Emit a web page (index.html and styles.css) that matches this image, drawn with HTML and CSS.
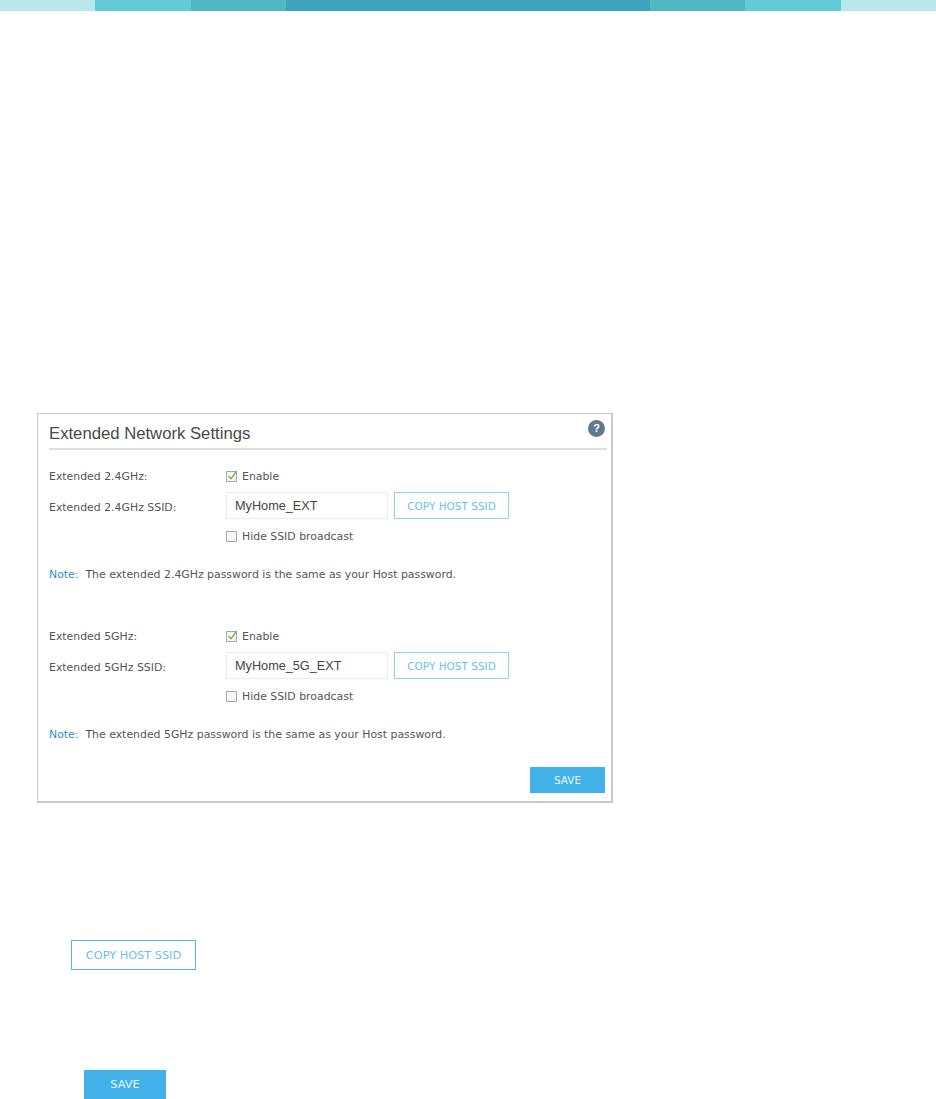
FILE: index.html
```html
<!DOCTYPE html>
<html lang="en">
<head>
<meta charset="utf-8">
<title>Extended Network Settings</title>
<link rel="stylesheet" href="styles.css">
</head>
<body>
<div class="band">
  <div class="seg s1"></div><div class="seg s2"></div><div class="seg s3"></div>
  <div class="seg s4"></div>
  <div class="seg s3"></div><div class="seg s2"></div><div class="seg s1"></div>
</div>

<section class="panel">
  <header class="head">
    <h1 class="title">Extended Network Settings</h1>
    <span class="help">?</span>
  </header>

  <div class="group">
    <div class="row row-check">
      <span class="label">Extended 2.4GHz:</span>
      <span class="check"><svg class="box" viewBox="0 0 12 12"><rect x="0.5" y="1.5" width="10" height="10" fill="#f6f6f6" stroke="#a9a9a9"/><path d="M2.6 5.8 5 8.6 10.8 1.2" fill="none" stroke="#6cb33f" stroke-width="1.3"/></svg>Enable</span>
    </div>
    <div class="row row-input">
      <span class="label">Extended 2.4GHz SSID:</span>
      <span class="input">MyHome_EXT</span>
      <button class="copy">COPY HOST SSID</button>
    </div>
    <div class="row row-check">
      <span class="label"></span>
      <span class="check"><svg class="box" viewBox="0 0 12 12"><rect x="0.5" y="1.5" width="10" height="10" fill="#f6f6f6" stroke="#a9a9a9"/></svg>Hide SSID broadcast</span>
    </div>
    <p class="note"><b class="note-key">Note:</b>The extended 2.4GHz password is the same as your Host password.</p>
  </div>

  <div class="group group-2">
    <div class="row row-check">
      <span class="label">Extended 5GHz:</span>
      <span class="check"><svg class="box" viewBox="0 0 12 12"><rect x="0.5" y="1.5" width="10" height="10" fill="#f6f6f6" stroke="#a9a9a9"/><path d="M2.6 5.8 5 8.6 10.8 1.2" fill="none" stroke="#6cb33f" stroke-width="1.3"/></svg>Enable</span>
    </div>
    <div class="row row-input">
      <span class="label">Extended 5GHz SSID:</span>
      <span class="input">MyHome_5G_EXT</span>
      <button class="copy">COPY HOST SSID</button>
    </div>
    <div class="row row-check">
      <span class="label"></span>
      <span class="check"><svg class="box" viewBox="0 0 12 12"><rect x="0.5" y="1.5" width="10" height="10" fill="#f6f6f6" stroke="#a9a9a9"/></svg>Hide SSID broadcast</span>
    </div>
    <p class="note"><b class="note-key">Note:</b>The extended 5GHz password is the same as your Host password.</p>
  </div>

  <div class="actions"><button class="save">SAVE</button></div>
</section>

<div class="sample sample-copy"><button class="copy copy-large">COPY HOST SSID</button></div>
<div class="sample sample-save"><button class="save save-large">SAVE</button></div>
</body>
</html>
```

FILE: styles.css
```css
* { box-sizing: border-box; }
html, body { margin: 0; padding: 0; background: #fff; }
body {
  height: 1099px;
  overflow: hidden;
  font-family: "DejaVu Sans", sans-serif;
  font-size: 10.9px;
  color: #555;
}
.band { display: flex; height: 11px; }
.seg { flex: 0 0 95.3px; }
.s1 { background: #b8e8ec; }
.s2 { background: #62cbd5; }
.s3 { background: #50b8c3; }
.s4 { flex: 1 1 auto; background: #3fa4bb; }

.panel {
  width: 576px;
  height: 390px;
  margin: 402px 0 0 37px;
  padding: 0 4px 0 11px;
  border: 1px solid #c9c9c9;
  border-width: 1px 2px 2px 1px;
}
.head {
  display: flex;
  justify-content: space-between;
  height: 36px;
  border-bottom: 2px solid #dedede;
}
.title {
  margin: 10px 0 0;
  font: 400 16.7px/20px "Liberation Sans", Arial, sans-serif;
  color: #4a4a4a;
}
.help {
  width: 17px;
  height: 17px;
  margin: 6px 2px 0 0;
  border-radius: 50%;
  background: #5f7a8c;
  color: #fff;
  font: 700 11px/17px "Liberation Sans", Arial, sans-serif;
  text-align: center;
}
.group { padding-top: 19px; }
.group-2 { padding-top: 47px; }
.row { display: flex; align-items: center; }
.row-check { height: 14px; }
.row-input { height: 27px; margin: 9px 0 10px; }
.label { flex: 0 0 177px; }
.row-input .label { padding-top: 3px; }
.check { display: flex; align-items: center; }
.box { width: 12px; height: 12px; margin-right: 4px; }
.input {
  width: 162px;
  height: 27px;
  padding: 1px 8px 0;
  border: 1px solid #ebebeb;
  font: 400 12.7px/25px "Liberation Sans", Arial, sans-serif;
  color: #444;
}
.copy {
  width: 115px;
  height: 27px;
  margin-left: 6px;
  padding: 1px 0 0;
  border: 1px solid #8ed2f2;
  background: #fff;
  color: #6cc0ee;
  font: 400 10.5px/1 "DejaVu Sans", sans-serif;
}
.note { margin: 25px 0 0; line-height: 14px; }
.note-key { margin-right: 7px; font-weight: 400; color: #2f8fc0; }
.actions { display: flex; justify-content: flex-end; margin: 25px 2px 0 0; }
.save {
  width: 75px;
  height: 26px;
  padding: 0;
  border: 0;
  background: #42b1e9;
  color: #e9f6fd;
  font: 400 10.4px/1 "DejaVu Sans", sans-serif;
}
.sample-copy { margin: 137px 0 0 71px; }
.copy-large { display: block; width: 125px; height: 30px; margin: 0; border-color: #4fb4e6; font-size: 11.3px; }
.sample-save { margin: 100px 0 0 84px; }
.save-large { display: block; width: 82px; height: 29px; font-size: 11.3px; }
```
